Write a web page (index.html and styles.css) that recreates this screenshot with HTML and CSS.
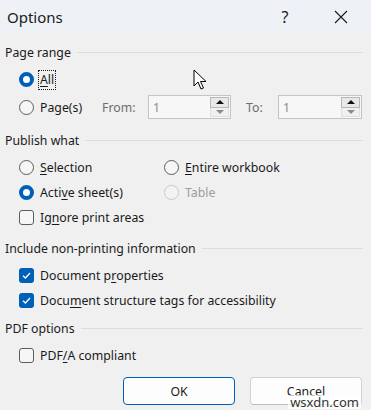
FILE: index.html
```html
<!DOCTYPE html>
<html lang="en">
<head>
<meta charset="UTF-8">
<meta name="viewport" content="width=device-width, initial-scale=1.0">
<title>Options</title>
<link rel="stylesheet" href="styles.css">
</head>
<body>

<div class="dialog">
  <div class="titlebar">
    <span class="title">Options</span>
    <span class="help">?</span>
    <span class="close">
      <svg width="14" height="14" viewBox="0 0 14 14"><path d="M1 1 L13 13 M13 1 L1 13" stroke="#1a1a1a" stroke-width="1.1" fill="none"/></svg>
    </span>
  </div>

  <div class="content">
    <!-- Page range -->
    <section class="group">
      <div class="group-title">Page range</div>
      <div class="rows">
        <label class="row"><span class="radio checked"></span><span class="focus"><u>A</u>ll</span></label>
        <div class="row row-spin">
          <label class="option"><span class="radio"></span>Pa<u>g</u>e(s)</label>
          <span class="spin-label from">From:</span>
          <span class="spin">
            <span class="spin-value">1</span>
            <span class="spin-btns"><span class="spin-up"></span><span class="spin-down"></span></span>
          </span>
          <span class="spin-label to">To:</span>
          <span class="spin spin-wide">
            <span class="spin-value">1</span>
            <span class="spin-btns"><span class="spin-up"></span><span class="spin-down"></span></span>
          </span>
        </div>
      </div>
    </section>

    <!-- Publish what -->
    <section class="group">
      <div class="group-title">Publish what</div>
      <div class="rows grid">
        <label class="option"><span class="radio"></span><u>S</u>election</label>
        <label class="option"><span class="radio"></span><u>E</u>ntire workbook</label>
        <label class="option"><span class="radio checked"></span>Acti<u>v</u>e sheet(s)</label>
        <label class="option disabled"><span class="radio"></span>Table</label>
        <label class="option"><span class="checkbox"></span>Ig<u>n</u>ore print areas</label>
      </div>
    </section>

    <!-- Include non-printing information -->
    <section class="group">
      <div class="group-title">Include non-printing information</div>
      <div class="rows">
        <label class="row"><span class="checkbox checked"><svg width="11" height="11" viewBox="0 0 11 11"><path d="M2 5.8 L4.4 8 L9 3" stroke="#fff" stroke-width="1.3" fill="none"/></svg></span>Document p<u>r</u>operties</label>
        <label class="row"><span class="checkbox checked"><svg width="11" height="11" viewBox="0 0 11 11"><path d="M2 5.8 L4.4 8 L9 3" stroke="#fff" stroke-width="1.3" fill="none"/></svg></span>Docu<u>m</u>ent structure tags for accessibility</label>
      </div>
    </section>

    <!-- PDF options -->
    <section class="group group-pdf">
      <div class="group-title">PDF options</div>
      <div class="rows">
        <label class="row"><span class="checkbox"></span>PDF<u>/</u>A compliant</label>
      </div>
    </section>

    <div class="buttons">
      <button type="button" class="btn btn-default">OK</button>
      <button type="button" class="btn">Cancel</button>
    </div>
  </div>

  <svg class="cursor" width="14" height="22" viewBox="0 0 14 22">
    <path d="M1 1 L1 17 L5 13 L8 20 L10.5 19 L7.5 12.5 L13 12.5 Z" fill="#fff" stroke="#000" stroke-width="1" stroke-linejoin="round"/>
  </svg>
  <span class="watermark">wsxdn.com</span>
</div>

</body>
</html>
```

FILE: styles.css
```css
body {
  margin: 0;
  padding: 0;
  font-family: "Segoe UI", "Noto Sans", sans-serif;
  font-size: 12.3px;
  color: #1a1a1a;
  background-color: #f0f0f0;
}

.dialog {
  position: relative;
  width: 371px;
  height: 410px;
  overflow: hidden;
  background-color: #f0f0f0;
}

u {
  text-decoration: underline;
  text-underline-offset: 2px;
}

.titlebar {
  display: flex;
  align-items: center;
  height: 33px;
  padding: 0 20px 0 7px;
  background-color: #eef2f7;
}

.title {
  flex: 1;
  font-size: 15px;
}

.help {
  width: 20px;
  text-align: center;
  font-size: 16px;
  margin-right: 36px;
}

.close {
  display: flex;
  justify-content: center;
  width: 20px;
}

.content {
  padding-top: 9px;
}

.group + .group {
  margin-top: 8px;
}

.group.group-pdf {
  margin-top: 5px;
}

.group-title {
  display: flex;
  align-items: center;
  gap: 6px;
  height: 20px;
  padding: 0 8px 0 5px;
}

.group-title::after {
  content: "";
  flex: 1;
  height: 1px;
  background-color: #dcdcdc;
}

.rows {
  padding: 5px 0 0 19px;
}

.rows.grid {
  display: grid;
  grid-template-columns: 145px 1fr;
}

.row,
.option {
  display: flex;
  align-items: center;
  height: 25px;
}

.row-spin {
  height: 30px;
}

.row-spin .option {
  width: 83px;
}

.radio {
  box-sizing: border-box;
  width: 15px;
  height: 15px;
  margin-right: 6px;
  border: 1px solid #5d5d5d;
  border-radius: 50%;
  background-color: #f6f6f6;
}

.radio.checked {
  border: 4.5px solid #005fb8;
  background-color: #fff;
}

.disabled {
  color: #9d9d9d;
}

.disabled .radio {
  border-color: #c9c9c9;
  background-color: #f3f3f3;
}

.checkbox {
  box-sizing: border-box;
  display: flex;
  align-items: center;
  justify-content: center;
  width: 15px;
  height: 15px;
  margin-right: 6px;
  border: 1px solid #5d5d5d;
  border-radius: 3px;
  background-color: #f6f6f6;
}

.checkbox.checked {
  border: none;
  background-color: #005fb8;
}

.focus {
  padding: 0 1px;
  margin-left: -1px;
  line-height: 18px;
  outline: 1px dotted #1a1a1a;
}

.spin-label {
  color: #6d6d6d;
}

.spin-label.from {
  width: 46px;
}

.spin-label.to {
  width: 32px;
  margin-left: 15px;
}

.spin {
  box-sizing: border-box;
  display: flex;
  align-items: center;
  justify-content: space-between;
  width: 83px;
  height: 24px;
  padding: 1px 1px 1px 4px;
  border: 1px solid #c4c4c4;
  background-color: #f7f7f7;
}

.spin.spin-wide {
  width: 84px;
}

.spin-value {
  color: #8a8a8a;
}

.spin-btns {
  display: flex;
  flex-direction: column;
  width: 19px;
  height: 20px;
}

.spin-up,
.spin-down {
  position: relative;
  flex: 1;
  box-sizing: border-box;
}

.spin-up {
  border: 1px solid #b8b8b8;
  background-color: #e8e8e8;
}

.spin-down {
  border: 1px solid #e0e0e0;
  border-top: none;
  background-color: #f0f0f0;
}

.spin-up::after,
.spin-down::after {
  content: "";
  position: absolute;
  left: 50%;
  top: 50%;
  margin-left: -4px;
  border-left: 4px solid transparent;
  border-right: 4px solid transparent;
}

.spin-up::after {
  margin-top: -2px;
  border-bottom: 4px solid #111;
}

.spin-down::after {
  margin-top: -2px;
  border-top: 4px solid #8a8a8a;
}

.buttons {
  display: flex;
  justify-content: flex-end;
  gap: 15px;
  margin-top: 9px;
  padding-right: 9px;
}

.btn {
  width: 112px;
  height: 28px;
  font-family: inherit;
  font-size: 12.3px;
  color: #1a1a1a;
  background-color: #fdfdfd;
  border: 1px solid #d2d2d2;
  border-bottom-color: #bdbdbd;
  border-radius: 4px;
}

.btn.btn-default {
  border: 1px solid #005fb8;
}

.cursor {
  position: absolute;
  left: 193px;
  top: 69px;
}

.watermark {
  position: absolute;
  right: 10px;
  bottom: 1px;
  padding: 0 2px;
  font-size: 13px;
  line-height: 14px;
  color: #333;
  background-color: rgba(255, 255, 255, 0.7);
}
```
